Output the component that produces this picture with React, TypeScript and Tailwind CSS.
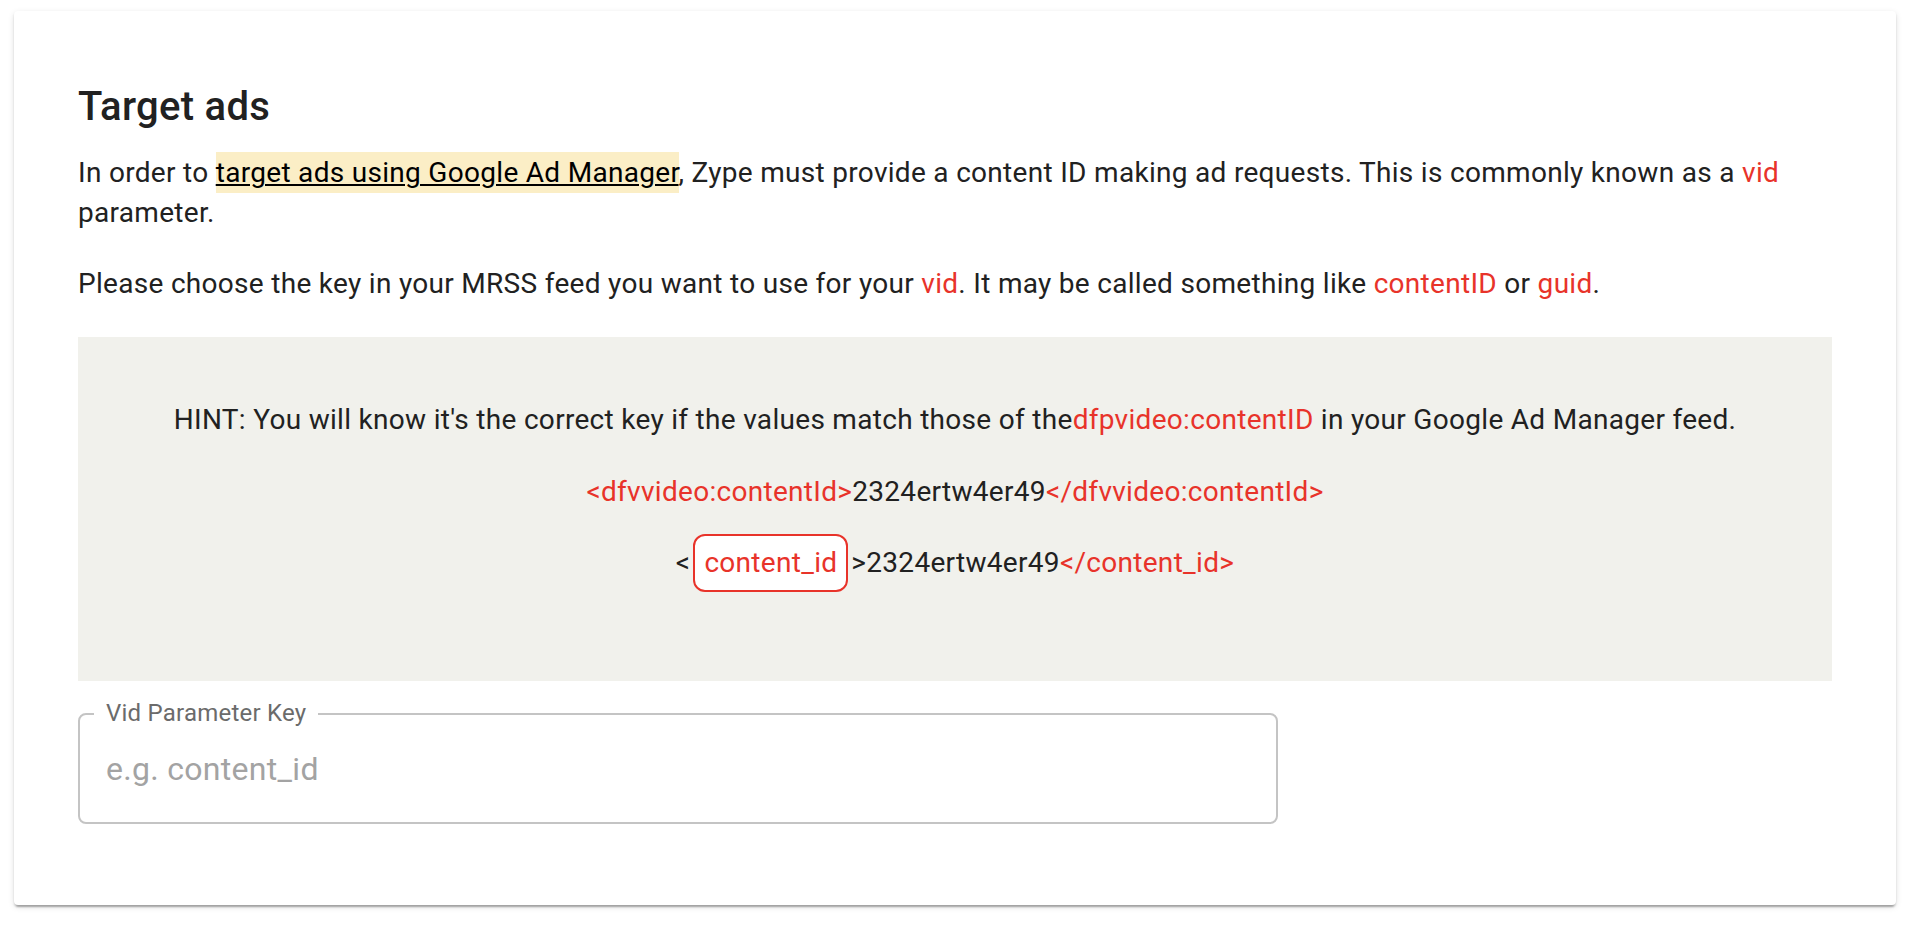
import React from 'react'

const red = 'text-[#e8332a]'

function Code({ children }: { children: React.ReactNode }) {
  return <span className={red}>{children}</span>
}

export default function App() {
  return (
    <div className="min-h-screen bg-white pt-[11px] pl-[14px] pr-[24px] font-['Roboto','Liberation_Sans',sans-serif] text-[#212121]">
      <div className="rounded-[4px] bg-white px-[64px] pt-[64px] pb-[81px] shadow-[0_4px_2px_-2px_rgba(0,0,0,0.2),0_2px_2px_0_rgba(0,0,0,0.14),0_2px_6px_0_rgba(0,0,0,0.12)]">
        {/* Title */}
        <h2 className="mb-[14px] text-[40px] font-medium leading-[64px] tracking-[0.0075em]">Target ads</h2>

        <p className="text-[28px] leading-[40px] tracking-[0.01071em]">
          In order to{' '}
          <a
            href="#"
            className="bg-[#fbeec6] py-[4px] text-black underline decoration-2 underline-offset-[2px]"
          >
            target ads using Google Ad Manager
          </a>
          , Zype must provide a content ID making ad requests. This is commonly known as a <Code>vid</Code> parameter.
        </p>

        <p className="mt-[31px] text-[28px] leading-[40px] tracking-[0.01071em]">
          Please choose the key in your MRSS feed you want to use for your <Code>vid</Code>. It may be called something
          like <Code>contentID</Code> or <Code>guid</Code>.
        </p>

        {/* Hint */}
        <div className="mt-[33px] flex flex-col items-center gap-[31.5px] bg-[#f1f1ec] pt-[63px] pb-[98px] text-[28px] leading-[40px] tracking-[0.01071em]">
          <p>
            HINT: You will know it's the correct key if the values match those of the
            <Code>dfpvideo:contentID</Code> in your Google Ad Manager feed.
          </p>
          <p>
            <Code>&lt;dfvvideo:contentId&gt;</Code>2324ertw4er49<Code>&lt;/dfvvideo:contentId&gt;</Code>
          </p>
          <p>
            &lt;
            <span className="mx-[3px] -my-[9px] inline-block rounded-[12px] border-2 border-[#e8332a] bg-white px-[9px] py-[7px] text-[#e8332a]">
              content_id
            </span>
            &gt;2324ertw4er49<Code>&lt;/content_id&gt;</Code>
          </p>
        </div>

        {/* Vid parameter key field */}
        <div className="relative mt-[32px] h-[111px] w-[1200px] rounded-[8px] border-2 border-[#c4c4c4]">
          <label className="absolute left-[14px] top-[-18px] bg-white px-[12px] text-[24px] leading-[32px] tracking-[0.00938em] text-[#6b6b6b]">
            Vid Parameter Key
          </label>
          <input
            type="text"
            placeholder="e.g. content_id"
            className="h-full w-full rounded-[8px] bg-transparent px-[26px] text-[32px] tracking-[0.00938em] text-[#212121] outline-none placeholder:text-[#a3a3a3]"
          />
        </div>
      </div>
    </div>
  )
}
